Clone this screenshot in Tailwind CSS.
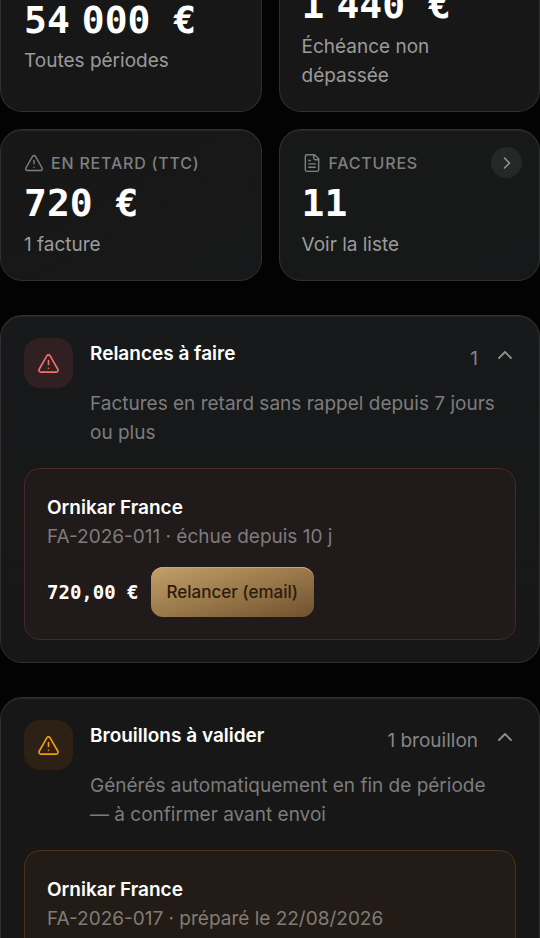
<!DOCTYPE html>
<html lang="fr">
<head>
<meta charset="utf-8">
<meta name="viewport" content="width=device-width, initial-scale=1">
<title>Facturation</title>
<script src="https://cdn.jsdelivr.net/npm/@tailwindcss/browser@4"></script>
</head>
<body class="bg-[#030304] font-['Inter','Noto_Sans',sans-serif] text-white text-[19px] leading-[29px] overflow-x-hidden">
<svg class="hidden" aria-hidden="true">
  <symbol id="alert" viewBox="0 0 24 24"><path d="m21.73 18-8-14a2 2 0 0 0-3.48 0l-8 14A2 2 0 0 0 4 21h16a2 2 0 0 0 1.73-3"/><path d="M12 9v4"/><path d="M12 17h.01"/></symbol>
  <symbol id="file" viewBox="0 0 24 24"><path d="M15 2H6a2 2 0 0 0-2 2v16a2 2 0 0 0 2 2h12a2 2 0 0 0 2-2V7Z"/><path d="M14 2v4a2 2 0 0 0 2 2h4"/><path d="M10 9H8"/><path d="M16 13H8"/><path d="M16 17H8"/></symbol>
  <symbol id="up" viewBox="0 0 24 24"><path d="m18 15-6-6-6 6"/></symbol>
  <symbol id="right" viewBox="0 0 24 24"><path d="m9 18 6-6-6-6"/></symbol>
</svg>
<main class="flex flex-col gap-[34px] pb-8">
  <section class="flex flex-col gap-[17px]" aria-label="Indicateurs">
    <div class="grid grid-cols-2 gap-[17px] -mt-[18px]">
      <article class="rounded-b-[22px] border border-t-0 border-[#303030] bg-[#171717] px-[23px] pt-[15px] pb-[21px]">
        <p class="font-['DejaVu_Sans_Mono',monospace] font-bold text-[38px] leading-[46px] whitespace-nowrap">54<span class="inline-block w-3"></span>000 €</p>
        <p class="mt-[3px] text-[#9b9b9b]">Toutes périodes</p>
      </article>
      <article class="rounded-b-[22px] border border-t-0 border-[#303030] bg-[#171717] px-[22px] pb-[21px]">
        <p class="font-['DejaVu_Sans_Mono',monospace] font-bold text-[38px] leading-[46px] whitespace-nowrap">1<span class="inline-block w-3"></span>440 €</p>
        <p class="mt-[4px] text-[#9b9b9b]">Échéance non<br>dépassée</p>
      </article>
    </div>
    <div class="grid grid-cols-2 gap-[17px]">
      <article class="rounded-[22px] border border-[#303030] bg-linear-to-br from-[#171717] to-[#171819] px-[23px] pt-[23px] pb-[21px] inset-shadow-[0_1px_0_#262626]">
        <h3 class="flex items-center gap-[7px] text-[16px] leading-[20px] font-medium tracking-wider text-[#7f7f7f]">
          <svg class="size-5 shrink-0 fill-none stroke-current stroke-[1.7] [stroke-linecap:round] [stroke-linejoin:round]"><use href="#alert"/></svg>EN RETARD (TTC)</h3>
        <p class="mt-[7px] font-['DejaVu_Sans_Mono',monospace] font-bold text-[38px] leading-[46px] whitespace-nowrap">720 €</p>
        <p class="mt-[4px] text-[#9b9b9b]">1 facture</p>
      </article>
      <a href="#factures" class="relative block rounded-[22px] border border-[#303030] bg-linear-to-br from-[#171918] to-[#171819] px-[22px] pt-[23px] pb-[21px] inset-shadow-[0_1px_0_#262626]">
        <h3 class="flex items-center gap-[7px] text-[16px] leading-[20px] font-medium tracking-wider text-[#7f7f7f]">
          <svg class="size-5 shrink-0 fill-none stroke-current stroke-[1.7] [stroke-linecap:round] [stroke-linejoin:round]"><use href="#file"/></svg>FACTURES</h3>
        <p class="mt-[7px] font-['DejaVu_Sans_Mono',monospace] font-bold text-[38px] leading-[46px] whitespace-nowrap">11</p>
        <p class="mt-[4px] text-[#9b9b9b]">Voir la liste</p>
        <span class="absolute right-[17px] top-[17px] grid size-[31px] place-items-center rounded-full bg-[#262727] text-[#969696]">
          <svg class="size-5 fill-none stroke-current stroke-[1.9] [stroke-linecap:round] [stroke-linejoin:round]"><use href="#right"/></svg>
        </span>
      </a>
    </div>
  </section>

  <section class="rounded-[22px] border border-[#303030] bg-linear-to-b from-[#17191a] to-[#171717] px-[23px] py-[22px] inset-shadow-[0_1px_0_#262626]">
    <header class="-mr-px grid grid-cols-[49px_1fr] gap-x-[17px]">
      <span class="grid h-[50px] w-[49px] place-items-center rounded-2xl bg-[#302022] text-[#f0716c]">
        <svg class="size-[23px] fill-none stroke-current stroke-[1.7] [stroke-linecap:round] [stroke-linejoin:round]"><use href="#alert"/></svg>
      </span>
      <div class="flex items-start pt-px">
        <h2 class="grow font-semibold">Relances à faire</h2>
        <span class="mt-[5px] text-[#858585]">1</span>
        <button type="button" aria-label="Replier les relances" aria-expanded="true" class="ml-[15px] mt-[4px] text-[#8f8f8f]">
          <svg class="size-6 fill-none stroke-current stroke-[1.8] [stroke-linecap:round] [stroke-linejoin:round]"><use href="#up"/></svg>
        </button>
      </div>
      <p class="col-start-2 mt-px pr-3 text-[#7c7c7d]">Factures en retard sans rappel depuis 7 jours ou plus</p>
    </header>
    <article class="mt-[21px] rounded-2xl border border-[#4a282a] bg-[#201a1a] px-[22px] pt-[24px] pb-[22px]">
      <h3 class="font-semibold">Ornikar France</h3>
      <p class="text-[#7f7b7b]">FA-2026-011 · échue depuis 10 j</p>
      <div class="mt-[16px] flex items-center gap-3">
        <span class="font-['DejaVu_Sans_Mono',monospace] font-bold">720,00 €</span>
        <button type="button" class="h-[50px] rounded-xl bg-linear-to-br from-[#c3a06c] via-[#9a794a] to-[#71522f] px-4 text-[17px] font-medium text-[#2c1b0c] inset-shadow-[0_1px_0_#c8a874]">Relancer (email)</button>
      </div>
    </article>
  </section>

  <section class="rounded-[22px] border border-[#303030] bg-[#171717] px-[23px] py-[22px] inset-shadow-[0_1px_0_#262626]">
    <header class="-mr-px grid grid-cols-[49px_1fr] gap-x-[17px]">
      <span class="grid h-[50px] w-[49px] place-items-center rounded-2xl bg-[#2d2115] text-[#f29c13]">
        <svg class="size-[23px] fill-none stroke-current stroke-[1.7] [stroke-linecap:round] [stroke-linejoin:round]"><use href="#alert"/></svg>
      </span>
      <div class="flex items-start pt-px">
        <h2 class="grow font-semibold">Brouillons à valider</h2>
        <span class="mt-[5px] text-[#858585]">1 brouillon</span>
        <button type="button" aria-label="Replier les brouillons" aria-expanded="true" class="ml-[15px] mt-[4px] text-[#8f8f8f]">
          <svg class="size-6 fill-none stroke-current stroke-[1.8] [stroke-linecap:round] [stroke-linejoin:round]"><use href="#up"/></svg>
        </button>
      </div>
      <p class="col-start-2 mt-px pr-3 text-[#7c7c7c]">Générés automatiquement en fin de période — à confirmer avant envoi</p>
    </header>
    <article class="mt-[21px] rounded-2xl border border-[#4a3418] bg-[#231c16] px-[22px] pt-[24px] pb-[22px]">
      <h3 class="font-semibold">Ornikar France</h3>
      <p class="text-[#807c77]">FA-2026-017 · préparé le 22/08/2026</p>
    </article>
  </section>
</main>
</body>
</html>
